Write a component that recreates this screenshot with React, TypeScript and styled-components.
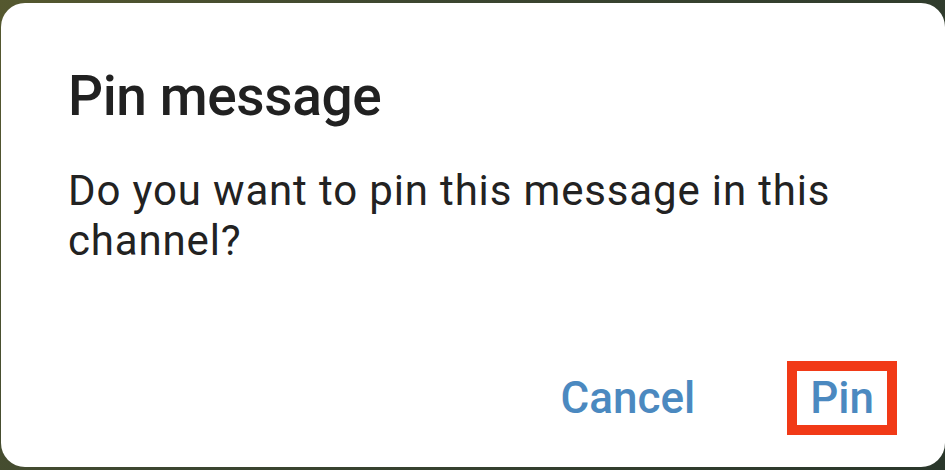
import React from "react";
import styled, { createGlobalStyle } from "styled-components";

const Global = createGlobalStyle`
  html, body { margin: 0; padding: 0; }
  body {
    width: 945px;
    height: 470px;
    overflow: hidden;
    background: linear-gradient(120deg, #55582f 0%, #3c4630 35%, #2a372b 100%);
    font-family: Roboto, "Noto Sans", "Liberation Sans", sans-serif;
  }
`;

const Backdrop = styled.div`
  box-sizing: border-box;
  width: 945px;
  height: 470px;
  padding: 3px 0 3px 1px;
  display: flex;
`;

const Dialog = styled.div`
  box-sizing: border-box;
  width: 944px;
  height: 464px;
  background: #ffffff;
  border-radius: 24px;
  padding: 60px 48px 32px 67px;
  display: flex;
  flex-direction: column;
`;

const Title = styled.h2`
  margin: 0;
  font-size: 55px;
  line-height: 66px;
  font-weight: 500;
  letter-spacing: -0.4px;
  color: #212121;
`;

const Message = styled.p`
  margin: 37px 0 0;
  font-size: 42px;
  line-height: 50px;
  font-weight: 400;
  letter-spacing: 0.85px;
  color: #222222;
  max-width: 800px;
`;

const Actions = styled.div`
  margin-top: auto;
  display: flex;
  justify-content: flex-end;
  gap: 69px;
`;

const ActionButton = styled.button<{ $highlight?: boolean }>`
  border: 10px solid ${(p) => (p.$highlight ? "#f13a17" : "transparent")};
  background: transparent;
  padding: 0 13px;
  margin: 0;
  font-family: Roboto, "Noto Sans", "Liberation Sans", sans-serif;
  font-size: 44px;
  line-height: 54px;
  font-weight: 500;
  color: #4b89c0;
  cursor: pointer;
`;

export default function App() {
  return (
    <>
      <Global />
      <Backdrop>
        <Dialog>
          <Title>Pin message</Title>
          <Message>Do you want to pin this message in this channel?</Message>
          <Actions>
            <ActionButton>Cancel</ActionButton>
            <ActionButton $highlight>Pin</ActionButton>
          </Actions>
        </Dialog>
      </Backdrop>
    </>
  );
}
